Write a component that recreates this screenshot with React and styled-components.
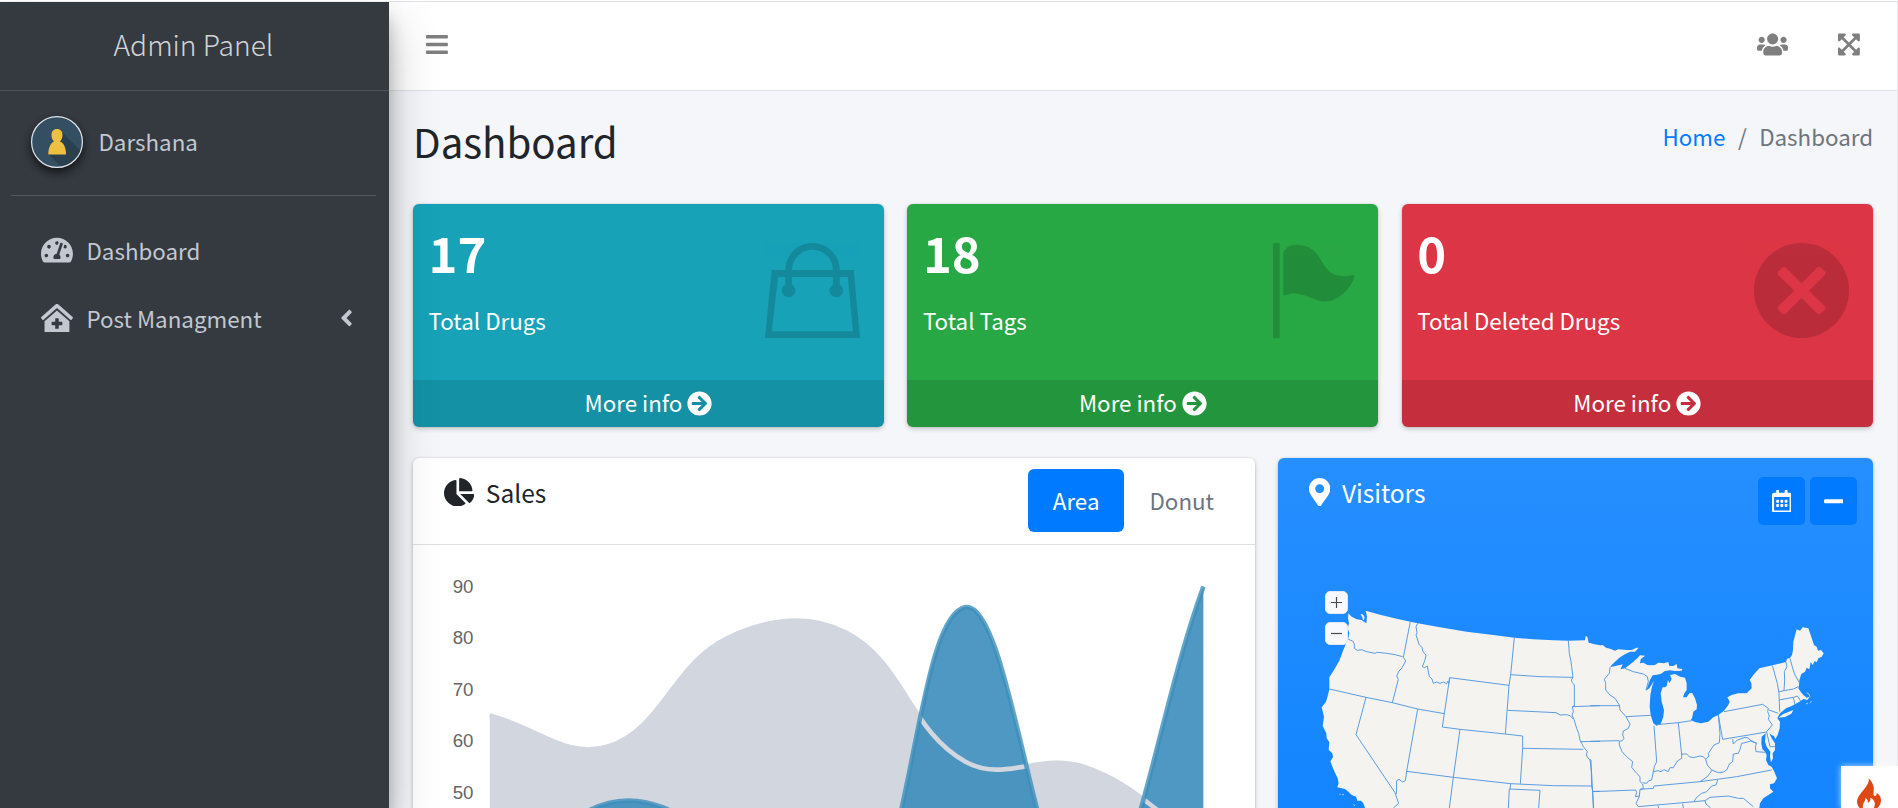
import React from "react";
import styled, { createGlobalStyle } from "styled-components";
import {
  FaAngleLeft,
  FaArrowCircleRight,
  FaBars,
  FaChartPie,
  FaClinicMedical,
  FaExpandArrowsAlt,
  FaMapMarkerAlt,
  FaMinus,
  FaRegCalendarAlt,
  FaTachometerAlt,
  FaUsers,
} from "react-icons/fa";

const GlobalStyle = createGlobalStyle`
  * { box-sizing: border-box; }
  body {
    margin: 0;
    overflow: hidden;
    background: #f4f6f9;
    color: #212529;
    font-family: "Noto Sans CJK JP", "Noto Sans", sans-serif;
    font-size: 22.35px;
    line-height: 36px;
  }
  svg { display: block; flex: none; }
`;

/* Each glyph keeps its own advance width at a height of 1em. */
const glyph = (Base, width) => styled(Base)`
  width: ${width}em;
  height: 1em;
`;

const BarsIcon = glyph(FaBars, 0.875);
const UsersIcon = glyph(FaUsers, 1.25);
const ExpandIcon = glyph(FaExpandArrowsAlt, 0.875);
const GaugeIcon = glyph(FaTachometerAlt, 1.125);
const ClinicIcon = glyph(FaClinicMedical, 1.125);
const PieIcon = glyph(FaChartPie, 1.0625);
const MarkerIcon = glyph(FaMapMarkerAlt, 0.75);
const CalendarIcon = glyph(FaRegCalendarAlt, 0.875);
const MinusIcon = glyph(FaMinus, 0.875);

const Page = styled.div`
  display: flex;
  height: 100vh;
  overflow: hidden;
  border-top: 1px solid #fff;
`;

const Sidebar = styled.aside`
  position: relative;
  z-index: 2;
  flex: none;
  width: 389px;
  margin-top: 1px;
  background: #343a40;
  color: #c2c7d0;
  box-shadow: 0 22px 44px rgba(0, 0, 0, 0.25), 0 16px 16px rgba(0, 0, 0, 0.22);
`;

const Brand = styled.div`
  height: 89px;
  padding: 18px 0 0 113.5px;
  border-bottom: 1px solid #4b545c;
  color: rgba(255, 255, 255, 0.8);
  font-size: 28.2px;
  font-weight: 300;
  line-height: 47px;
`;

const UserPanel = styled.div`
  display: flex;
  align-items: center;
  gap: 15.5px;
  height: 105px;
  margin: 0 13px 0 11px;
  padding: 0 0 2px 20px;
  border-bottom: 1px solid #4f5962;
`;

const UserName = styled.span`
  margin-top: -2px;
`;

const Avatar = styled.span`
  width: 52px;
  height: 52px;
  border-radius: 50%;
  box-shadow: 0 5px 9px rgba(0, 0, 0, 0.4), 0 4px 9px rgba(0, 0, 0, 0.3);
`;

const Menu = styled.nav`
  padding: 20px 0 0 41px;
`;

const MenuItem = styled.a`
  display: flex;
  align-items: center;
  height: 68px;
  padding-right: 36.5px;
`;

const MenuIcon = styled.span`
  display: flex;
  width: 45.5px;
  font-size: 28.4px;
`;

const MenuLabel = styled.span`
  flex: 1;
`;

const MenuArrow = styled(FaAngleLeft)`
  width: 0.5em;
  height: 1em;
  font-size: 26px;
`;

const Main = styled.main`
  flex: 1;
  min-width: 0;
  border-right: 1px solid #e6e8eb;
`;

const Navbar = styled.header`
  display: flex;
  align-items: center;
  gap: 50px;
  height: 90px;
  padding: 0 37px 3px;
  background: #fff;
  border-top: 1px solid #dee2e6;
  border-bottom: 1px solid #dee2e6;
  color: #7f7f7f;
  font-size: 25px;
`;

const Spacer = styled.span`
  flex: 1;
`;

const Content = styled.div`
  padding: 0 24px;
`;

const TitleRow = styled.div`
  display: flex;
  justify-content: space-between;
  height: 113px;
`;

const Title = styled.h1`
  margin: 0;
  padding-top: 23px;
  font-size: 40.2px;
  font-weight: 400;
  line-height: 54px;
`;

const Breadcrumb = styled.div`
  display: flex;
  gap: 12.5px;
  padding-top: 27px;
  color: #6c757d;
`;

const HomeLink = styled.a`
  color: #007bff;
`;

const BoxRow = styled.div`
  display: grid;
  grid-template-columns: repeat(3, 471px);
  column-gap: 23.4px;
`;

const SmallBox = styled.section`
  display: flex;
  flex-direction: column;
  height: 223px;
  overflow: hidden;
  border-radius: 6px;
  background: ${(p) => p.$color};
  box-shadow: 0 0 2px rgba(0, 0, 0, 0.125), 0 2px 5px rgba(0, 0, 0, 0.2);
  color: #fff;
`;

const BoxBody = styled.div`
  display: flex;
  justify-content: space-between;
  height: 176px;
  padding: 39px 24px 0 15.5px;
`;

const BoxValue = styled.div`
  height: 60px;
  margin-top: -21px;
  font-size: 49px;
  font-weight: 700;
  line-height: 60px;
`;

const BoxLabel = styled.div`
  margin-top: 19.5px;
`;

const BoxFooter = styled.a`
  display: flex;
  justify-content: center;
  align-items: center;
  gap: 5px;
  height: 47px;
  background: rgba(0, 0, 0, 0.1);

  svg { margin-top: -1px; font-size: 25px; }
`;

const FooterText = styled.span`
  margin-top: -4px;
`;

const CardRow = styled.div`
  display: grid;
  grid-template-columns: 842px 595px;
  column-gap: 23px;
  margin-top: 31px;
`;

const Card = styled.section`
  height: 700px;
  border-radius: 6px;
  background: #fff;
  box-shadow: 0 0 2px rgba(0, 0, 0, 0.125), 0 2px 5px rgba(0, 0, 0, 0.2);
`;

const VisitorsCard = styled(Card)`
  position: relative;
  background: linear-gradient(180deg, #268fff, #007bff);
  color: #fff;
`;

const CardHeader = styled.div`
  display: flex;
  justify-content: space-between;
  height: ${(p) => p.$height}px;
  padding: ${(p) => p.$padding};
  border-bottom: ${(p) => (p.$line ? "1px solid #dfdfdf" : "0")};
`;

const CardTitle = styled.h3`
  display: flex;
  align-items: center;
  gap: ${(p) => p.$gap}px;
  height: 40px;
  margin: ${(p) => p.$top}px 0 0;
  font-size: 24.5px;
  font-weight: 400;

  svg { margin-top: -2px; font-size: 28.5px; }
`;

const Tabs = styled.div`
  display: flex;
`;

const Tab = styled.a`
  height: 63px;
  padding: 0 25px;
  border-radius: 6px;
  background: ${(p) => (p.$active ? "#007bff" : "transparent")};
  color: ${(p) => (p.$active ? "#fff" : "#6c757d")};
  line-height: 62px;
`;

const Tools = styled.div`
  display: flex;
  gap: 5px;
`;

const ToolButton = styled.button`
  display: flex;
  align-items: center;
  justify-content: center;
  width: 47px;
  height: 48px;
  padding: 0;
  border: 0;
  border-radius: 5px;
  background: #007bff;
  color: #fff;
  font-size: 22.5px;
`;

const ZoomControls = styled.div`
  position: absolute;
  top: 133px;
  left: 47px;
  display: grid;
  gap: 8px;
`;

const ZoomButton = styled.button`
  display: flex;
  align-items: center;
  justify-content: center;
  width: 23px;
  height: 23px;
  padding: 0;
  border: 1px solid #e3e8ef;
  border-radius: 5px;
  background: #f8f9fc;
`;

const DebugBadge = styled.div`
  position: fixed;
  z-index: 3;
  right: 0;
  bottom: 0;
  display: flex;
  justify-content: center;
  width: 57px;
  height: 42px;
  padding: 12px 1px 0 0;
  background: #fff;
  box-shadow: 0 0 6px rgba(255, 255, 255, 0.7);
`;

const BagIcon = () => (
  <svg width="95" height="95" viewBox="0 0 95 95" opacity="0.15">
    <path
      fillRule="evenodd"
      d="M6.7 27H20.3C20.3 12 32.3 0 47.5 0S74.700 12 74.700 27H88.700L95 95H0ZM27 27H68C68 15.700 58.800 6.700 47.500 6.700S27 15.700 27 27ZM13 34L6.700 88.300H88L82.700 34H74.700V41.500A6.800 6.800 0 1 1 68 41.500V34H27V41.500A6.800 6.800 0 1 1 20.300 41.500V34Z"
    />
  </svg>
);

const FlagIcon = () => (
  <svg width="81.500" height="96" viewBox="0 0 81.500 96" opacity="0.15">
    <rect x="0" y="0" width="6.700" height="95.300" rx="1.500" />
    <path d="M10.300 52.300V9C14 3 19 1.700 24 1.700C36 1.700 43 8 48.500 18C54 28 60 33.300 71 33.300C75 33.300 78.500 32.500 81.500 31.300C81.500 41 67 58.500 52 58.500C41 58.500 34 50.500 20 50.500C16 50.500 14 52.500 10.300 52.300Z" />
  </svg>
);

const CloseCircleIcon = () => (
  <svg width="95" height="95" viewBox="0 0 285 285" opacity="0.15">
    <path
      fillRule="evenodd"
      d="M142.500 0A142.500 142.500 0 1 1 142.500 285A142.500 142.500 0 1 1 142.500 0ZM142.500 121L189 74Q195 68 201 74L212 85Q218 91 212 97L165 143L212 189Q218 195 212 200L201 211Q195 217 189 211L142.500 165L96 211Q90 217 84 211L73 200Q68 195 73 189L121 143L73 97Q68 91 73 85L84 74Q90 68 96 74Z"
    />
  </svg>
);

const UserPicture = () => (
  <svg width="52" height="52" viewBox="0 0 52 52">
    <circle cx="26" cy="26" r="25.500" fill="#344e62" />
    <path d="M31 16L50 35Q44 49 31 51L17 38Z" fill="#2b404f" />
    <path
      d="M26 13C29.500 13 31.500 15.500 31.500 19C31.500 22 30.500 24 29 25.500C33 27 35 32 35 38.500H17.300C17.300 32 19.500 27 23 25.500C21.500 24 20.500 22 20.500 19C20.500 15.500 22.500 13 26 13Z"
      fill="#edc140"
    />
    <circle cx="26" cy="26" r="25.400" fill="none" stroke="#dfe4e8" strokeWidth="1.200" />
  </svg>
);

const FlameIcon = () => (
  <svg width="24" height="34" viewBox="0 0 72 102">
    <path
      fill="#dd4814"
      d="M34 0C40 12 26 28 14 43C6 53 0 61 0 71C0 84 10 95 25 100C18 94 15 84 20 75C23 70 26 66 25 60C31 62 33 68 32 74C38 73 42 66 40 59C52 64 59 78 49 92C47 95 46 97 43 100C61 94 72 82 72 66C72 54 65 49 59 44C60 50 57 54 54 54C46 54 52 39 50 28C48 16 42 7 34 0Z"
    />
  </svg>
);

const X0 = 76.7;
const STEP = 118.95;
const yOf = (v) => 41.5 + (90 - v) * 5.155;

/* Cardinal spline through the points with tension 0.4. */
function spline(values) {
  const pts = values.map((v, i) => ({ x: X0 + i * STEP, y: yOf(v) }));
  const ctrl = pts.map((p, i) => {
    const a = pts[i - 1] || p;
    const b = pts[i + 1] || p;
    const d1 = Math.hypot(p.x - a.x, p.y - a.y);
    const d2 = Math.hypot(b.x - p.x, b.y - p.y);
    const fa = (0.4 * d1) / (d1 + d2);
    const fb = (0.4 * d2) / (d1 + d2);
    const cap = (y) => Math.max(y, yOf(90));
    return {
      in: [p.x - fa * (b.x - a.x), cap(p.y - fa * (b.y - a.y))],
      out: [p.x + fb * (b.x - a.x), cap(p.y + fb * (b.y - a.y))],
    };
  });
  return pts
    .map((p, i) =>
      i === 0 ? `M${p.x} ${p.y}` : `C${ctrl[i - 1].out} ${ctrl[i].in} ${p.x} ${p.y}`
    )
    .join("");
}

const AreaChart = () => {
  const goods = spline([28, 48, 40, 19, 86, 27, 90]);
  const electronics = spline([65, 59, 80, 81, 56, 55, 40]);
  const close = `V505H${X0}Z`;
  return (
    <svg width="842" height="560" viewBox="0 0 842 560">
      {[90, 80, 70, 60, 50].map((v) => (
        <text
          key={v}
          x="60.500"
          y={yOf(v) + 6}
          textAnchor="end"
          fill="#666"
          fontFamily="Liberation Sans, Arial, sans-serif"
          fontSize="18.700"
        >
          {v}
        </text>
      ))}
      <path d={electronics + close} fill="#d2d6de" />
      <path d={goods + close} fill="rgba(60,141,188,0.9)" />
      <path d={electronics} fill="none" stroke="#d2d6de" strokeWidth="4.600" />
      <path d={goods} fill="none" stroke="rgba(60,141,188,0.8)" strokeWidth="4.600" />
    </svg>
  );
};

const westLand =
  "145,130 155,140 170,148 185,150 192,155 199,160 201,140 197,122 240,134 290,146 331,155 353,160 420,172 500,185 580,195 643,203 700,208 760,211 805,212 855,211 857,198 862,200 866,218 880,222 900,226 900,714 195,714 190,700 183,692 172,692 168,680 155,675 145,665 135,657 112,652 116,640 113,625 105,608 98,592 91,574 99,562 97,550 86,540 88,517 80,505 79,490 68,468 72,440 65,412 78,395 84,375 88,357 88,322 102,300 118,272 128,245 140,215 145,205 148,190 143,175 147,160 144,145";

const westBorders = [
  "145,208 158,213 163,222 163,235 172,241 185,239 200,245 225,250 232,247 260,250 285,254 308,260",
  "331,155 310,262",
  "310,262 317,273 305,295 297,303 290,318 295,328 277,398",
  "88,357 198,382 277,398 353,417 433,431",
  "353,160 348,170 351,188 348,195 358,225 366,232 369,245 378,255 375,270 367,290 374,293 382,288 388,320 396,327 400,340 410,336 420,340 430,336 440,341 443,334 447,340 449,323",
  "449,323 627,346",
  "449,323 433,431 427,471",
  "427,471 480,478 616,492 668,498",
  "643,203 632,314 627,346 616,492",
  "632,314 720,320 819,322",
  "805,212 808,250 813,275 815,290 819,322 814,330 817,338 823,345 823,408",
  "623,421 768,428 780,435 800,434 810,437 820,447",
  "823,408 817,410 820,425 816,436 822,448 830,475 836,490 840,510 850,530 862,545 859,555 866,567 873,570 875,648",
  "817,410 900,407",
  "668,498 668,535 850,538",
  "668,535 661,641",
  "480,478 460,622 448,714",
  "353,417 320,604 316,632 308,636 297,628 290,632 289,672",
  "320,604 460,622 632,641 760,647 875,648",
  "198,382 168,494 285,668 296,700 280,714",
  "840,515 900,514",
  "632,641 630,657",
  "625,714 628,657 720,661 716,714",
  "875,648 878,664 900,664",
  "878,664 881,714",
];

const eastLand =
  "0,130 12,134 25,137 38,135 48,143 60,146 75,152 85,148 110,150 125,150 140,143 146,143 135,155 120,155 105,163 90,172 75,185 65,195 60,202 75,198 90,195 98,193 92,208 105,205 118,195 130,185 142,175 150,166 165,167 152,178 150,190 160,188 172,195 185,196 195,195 205,188 222,190 235,186 238,198 250,198 260,192 262,205 277,207 275,212 255,213 240,211 225,213 212,222 200,224 188,226 180,240 172,262 168,272 178,265 192,243 186,260 181,285 179,320 182,345 190,370 200,377 212,372 220,350 222,330 215,305 212,280 218,262 226,262 230,258 234,240 238,250 245,237 240,225 255,222 270,230 285,233 290,250 290,270 283,280 279,292 290,292 298,280 306,278 315,295 321,315 320,328 310,335 306,355 302,360 315,366 333,370 355,365 370,352 385,345 402,332 415,315 419,305 412,292 425,285 445,280 470,280 485,265 484,250 479,240 490,225 508,205 547,196 588,186 591,176 600,174 606,165 609,150 610,125 620,88 630,92 638,82 655,85 662,105 672,135 680,140 684,152 693,150 701,160 695,170 685,175 680,187 674,183 668,195 662,186 658,208 650,203 645,215 634,222 628,240 627,255 625,265 632,275 640,285 650,293 659,290 652,300 640,297 632,303 620,310 605,318 588,325 570,340 562,355 570,365 569,385 563,405 556,417 552,408 545,405 538,400 545,415 555,430 555,450 548,460 549,475 543,487 540,470 541,455 530,440 525,425 527,400 515,410 514,430 517,447 525,455 530,465 528,480 535,495 545,500 553,515 561,535 552,550 540,553 540,565 550,575 535,585 520,595 510,610 508,624 0,624";

const eastBorders = [
  "60,202 58,220 43,238 47,250 47,270 60,285 75,295 88,315 90,330 108,350",
  "0,317 88,317",
  "108,350 182,346",
  "105,205 130,215 160,222 172,230 175,245 168,270",
  "108,350 120,372 115,385 100,393 98,405 102,415 97,422 88,424 88,435 96,455 112,472 128,485 125,502 140,520 150,530 150,545 158,552",
  "0,424 88,422",
  "192,377 200,485 193,500 190,515 185,540 175,543 170,550 158,548",
  "200,374 265,368 305,362",
  "265,368 275,465",
  "190,515 205,512 213,515 222,509 235,515 240,503 250,503 262,483 275,475 275,462 290,462 298,470 310,473 330,468 340,470 347,478 357,468 355,460 372,435 388,428 390,400 385,345",
  "385,345 398,418 530,396",
  "402,335 518,313 535,325 533,335 538,348 535,358 547,375 530,395",
  "537,330 565,340",
  "547,196 555,225 562,250 567,280 569,335",
  "588,186 591,200 583,215 584,240 582,272",
  "600,175 608,205 615,225 628,248",
  "567,275 583,272 610,267 625,260",
  "567,300 610,292 622,288 632,303",
  "610,292 615,315",
  "530,396 540,440 555,440",
  "428,418 430,432 442,420 465,412 475,414 480,420 500,430 496,440 498,455 525,457",
  "500,430 482,423 465,428 455,430 450,448 445,460 430,462 428,485 418,492 410,510 400,516 385,518 365,510 352,495 347,478",
  "150,568 190,565 192,558 330,545 440,530 545,510",
  "367,510 352,530 330,545",
  "383,540 378,555 365,558 350,575 335,580 320,592 312,605",
  "145,620 312,605 345,602 360,592 415,588 445,595 460,595 490,620",
  "158,552 160,566 150,568 148,590 138,610 145,620",
  "8,575 137,570 140,578 136,590 148,588",
  "0,480 5,520 10,624",
  "345,602 348,612 362,624",
  "204,617 206,624",
  "278,611 280,624",
];

const UsMap = () => (
  <svg width="595" height="238" viewBox="-66 0 1785 714" fill="#f4f3f0">
    <polygon points={westLand} />
    <path d="M183 133l6 2 4 8-3 7-2-8ZM118 673h4M126 674h6M160 704l5 3" stroke="#f4f3f0" strokeWidth="2" />
    <g transform="translate(870 90)">
      <polygon points={eastLand} />
      <polygon points="566,353 578,343 610,330 604,341 585,351" />
      <path d="M650 278q9 3 10 12M648 312l6-3M659 309l6-5" fill="none" stroke="#f4f3f0" strokeWidth="2" />
    </g>
    <g fill="none" stroke="#5096e0" strokeWidth="2.800">
      {westBorders.map((p) => (
        <polyline key={p} points={p} />
      ))}
      <g transform="translate(870 90)">
        {eastBorders.map((p) => (
          <polyline key={p} points={p} />
        ))}
      </g>
    </g>
  </svg>
);

const boxes = [
  { value: "17", label: "Total Drugs", color: "#17a2b8", Icon: BagIcon },
  { value: "18", label: "Total Tags", color: "#28a745", Icon: FlagIcon },
  { value: "0", label: "Total Deleted Drugs", color: "#dc3545", Icon: CloseCircleIcon },
];

export default function App() {
  return (
    <Page>
      <GlobalStyle />
      <Sidebar>
        <Brand>Admin Panel</Brand>
        <UserPanel>
          <Avatar>
            <UserPicture />
          </Avatar>
          <UserName>Darshana</UserName>
        </UserPanel>
        <Menu>
          <MenuItem>
            <MenuIcon>
              <GaugeIcon />
            </MenuIcon>
            <MenuLabel>Dashboard</MenuLabel>
          </MenuItem>
          <MenuItem>
            <MenuIcon>
              <ClinicIcon />
            </MenuIcon>
            <MenuLabel>Post Managment</MenuLabel>
            <MenuArrow />
          </MenuItem>
        </Menu>
      </Sidebar>
      <Main>
        <Navbar>
          <BarsIcon />
          <Spacer />
          <UsersIcon />
          <ExpandIcon />
        </Navbar>
        <Content>
          <TitleRow>
            <Title>Dashboard</Title>
            <Breadcrumb>
              <HomeLink>Home</HomeLink>
              <span>/</span>
              <span>Dashboard</span>
            </Breadcrumb>
          </TitleRow>
          <BoxRow>
            {boxes.map(({ value, label, color, Icon }) => (
              <SmallBox key={label} $color={color}>
                <BoxBody>
                  <div>
                    <BoxValue>{value}</BoxValue>
                    <BoxLabel>{label}</BoxLabel>
                  </div>
                  <Icon />
                </BoxBody>
                <BoxFooter>
                  <FooterText>More info</FooterText>
                  <FaArrowCircleRight />
                </BoxFooter>
              </SmallBox>
            ))}
          </BoxRow>
          <CardRow>
            <Card>
              <CardHeader $height={87} $line $padding="11px 16px 0 31px">
                <CardTitle $gap={11.5} $top={4}>
                  <PieIcon />
                  Sales
                </CardTitle>
                <Tabs>
                  <Tab $active>Area</Tab>
                  <Tab>Donut</Tab>
                </Tabs>
              </CardHeader>
              <AreaChart />
            </Card>
            <VisitorsCard>
              <CardHeader $height={112} $padding="19px 16px 0 31px">
                <CardTitle $gap={11.5} $top={-4}>
                  <MarkerIcon />
                  Visitors
                </CardTitle>
                <Tools>
                  <ToolButton>
                    <CalendarIcon />
                  </ToolButton>
                  <ToolButton>
                    <MinusIcon />
                  </ToolButton>
                </Tools>
              </CardHeader>
              <UsMap />
              <ZoomControls>
                <ZoomButton>
                  <svg width="11" height="11" viewBox="0 0 11 11" stroke="#4a4a4a" strokeWidth="1.200">
                    <path d="M0 5.500h11M5.500 0v11" />
                  </svg>
                </ZoomButton>
                <ZoomButton>
                  <svg width="11" height="11" viewBox="0 0 11 11" stroke="#4a4a4a" strokeWidth="1.200">
                    <path d="M0 5.500h11" />
                  </svg>
                </ZoomButton>
              </ZoomControls>
            </VisitorsCard>
          </CardRow>
        </Content>
      </Main>
      <DebugBadge>
        <FlameIcon />
      </DebugBadge>
    </Page>
  );
}
